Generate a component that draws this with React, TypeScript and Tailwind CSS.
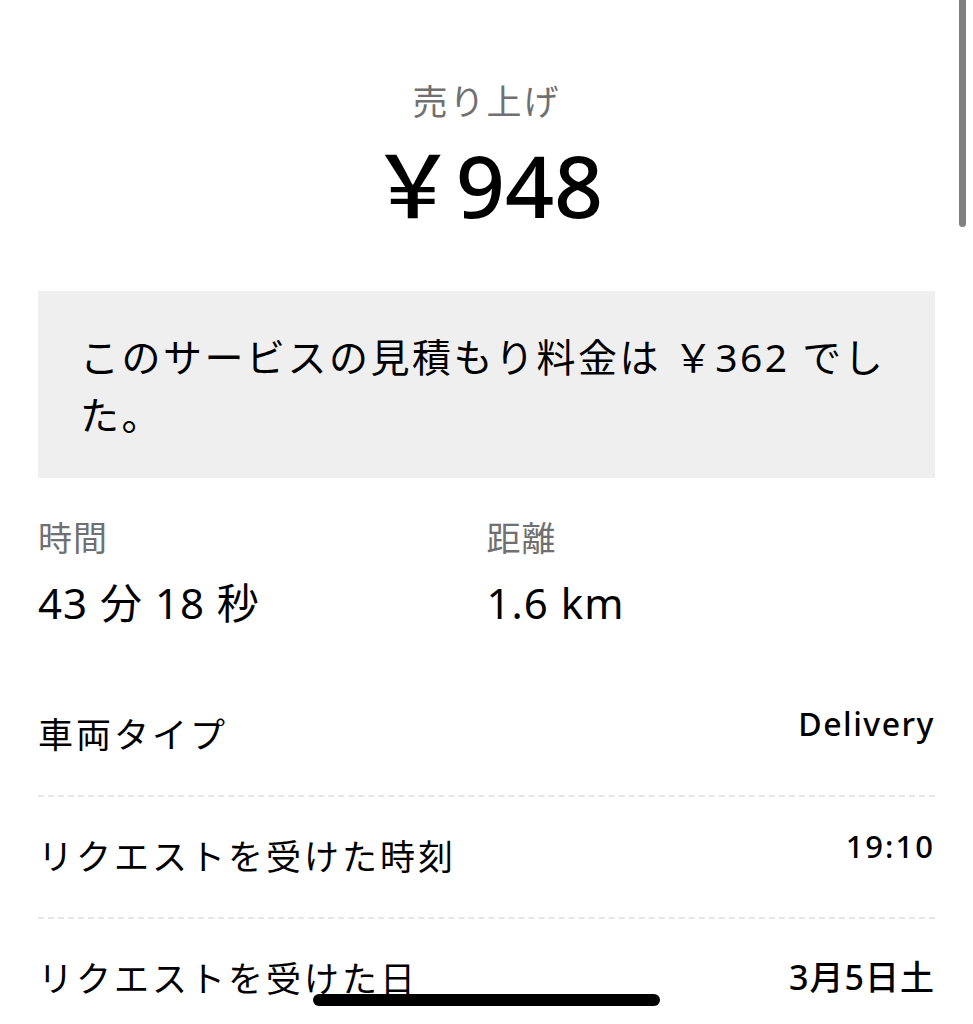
const font = "font-['Noto_Sans','Noto_Sans_CJK_JP',sans-serif]";

const Stat = ({ label, value }: { label: string; value: string }) => (
  <div>
    <p className="text-[34px] leading-[44px] tracking-[1px] text-[#707070]">{label}</p>
    <p className="mt-[17px] text-[42px] leading-[52px] tracking-[1px] text-black">{value}</p>
  </div>
);

const DetailRow = ({
  label,
  value,
  valueClass,
  last,
}: {
  label: string;
  value: string;
  valueClass: string;
  last?: boolean;
}) => (
  <div
    className={
      last
        ? "flex items-start justify-between pt-[38px] pb-[38px]"
        : "flex items-start justify-between pt-[38px] pb-[38px] border-b-2 border-dashed border-[#e6e6e6]"
    }
  >
    <span className="text-[35px] leading-[44px] tracking-[3px] text-black">{label}</span>
    <span className={valueClass}>{value}</span>
  </div>
);

export default function App() {
  return (
    <div className={`relative h-[1024px] w-full overflow-hidden bg-white ${font}`}>
      <div className="pt-[78px] text-center">
        <p className="text-[35px] leading-[48px] tracking-[2px] text-[#707070]">売り上げ</p>
        <p className="mt-[9px] text-[86px] leading-[100px] font-medium text-black">￥948</p>
      </div>

      <div className="mx-[38px] mt-[56px] bg-[#efefef] pl-[42px] pr-[42px] pt-[37px] pb-[34px]">
        <p className="text-[39px] leading-[58px] tracking-[2.5px] text-black">
          このサービスの見積もり料金は ￥362 でした。
        </p>
      </div>

      <div className="mx-[38px] mt-[38px] grid grid-cols-2">
        <Stat label="時間" value="43 分 18 秒" />
        <Stat label="距離" value="1.6 km" />
      </div>

      <div className="mx-[38px] mt-[46px]">
        <DetailRow
          label="車両タイプ"
          value="Delivery"
          valueClass="text-[32px] leading-[22px] font-medium tracking-[1.5px] text-black"
        />
        <DetailRow
          label="リクエストを受けた時刻"
          value="19:10"
          valueClass="text-[31px] leading-[22px] font-medium tracking-[2px] text-black"
        />
        <DetailRow
          label="リクエストを受けた日"
          value="3月5日土"
          valueClass="text-[34px] leading-[40px] font-medium tracking-[1px] text-black"
          last
        />
      </div>

      {/* scroll indicator */}
      <div className="absolute right-[7px] top-0 h-[227px] w-[7px] rounded-b-full bg-[#808080]" />
      {/* home indicator */}
      <div className="absolute left-[313px] top-[994px] h-[12px] w-[347px] rounded-full bg-black" />
    </div>
  );
}
